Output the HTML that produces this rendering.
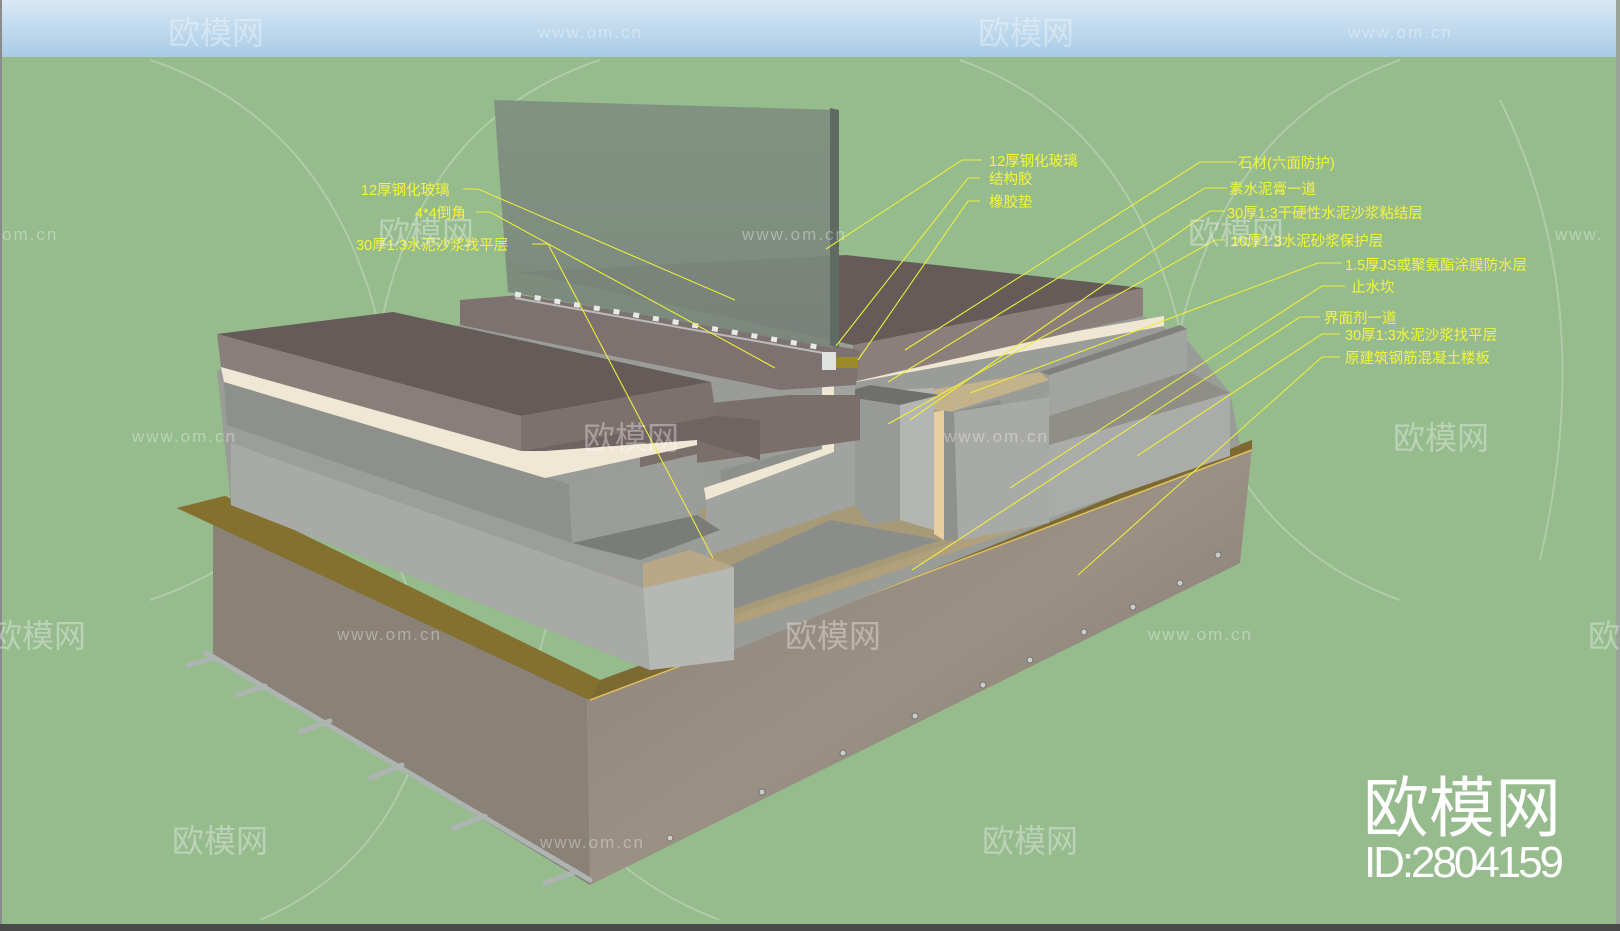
<!DOCTYPE html>
<html><head><meta charset="utf-8"><style>
html,body{margin:0;padding:0;background:#96bb8d;}
svg{display:block}
.l{font-family:"Liberation Sans","Noto Sans CJK SC",sans-serif;font-size:14.5px;fill:#f4f53a}
.ln{stroke:#ecee3c;stroke-width:1.1;fill:none}
.wm{font-family:"Liberation Sans","Noto Sans CJK SC",sans-serif;fill:#fff;opacity:.35}
</style></head><body>
<svg width="1620" height="931" viewBox="0 0 1620 931" xmlns="http://www.w3.org/2000/svg">
<defs>
<linearGradient id="top" x1="0" y1="0" x2="0" y2="1"><stop offset="0" stop-color="#d8e8f5"/><stop offset="1" stop-color="#a9cbe6"/></linearGradient>
<linearGradient id="slabR" x1="0" y1="0" x2="1" y2="1"><stop offset="0" stop-color="#8c8177"/><stop offset=".5" stop-color="#9a9084"/><stop offset="1" stop-color="#7d746b"/></linearGradient>
<linearGradient id="glass" x1="0" y1="0" x2="0" y2="1"><stop offset="0" stop-color="#7f8f80"/><stop offset="1" stop-color="#7a857c"/></linearGradient>
</defs>
<rect width="1620" height="931" fill="#96bb8d"/>
<rect width="1620" height="57" fill="url(#top)"/>
<rect x="0" y="0" width="2" height="931" fill="#8a8a8a"/>
<rect x="1616" y="0" width="4" height="931" fill="#9aa39a"/>
<rect x="0" y="924" width="1620" height="7" fill="#4a4a4a"/>

<g stroke="#c9dcc4" stroke-width="2" fill="none" opacity=".5">
<path d="M150 60 Q330 120 380 330 Q330 540 150 600"/>
<path d="M600 60 Q420 120 380 330 Q430 540 600 600"/>
<path d="M960 60 Q1130 120 1180 330 Q1130 540 960 600"/>
<path d="M1400 60 Q1230 120 1180 330 Q1230 540 1400 600"/>
<path d="M1500 100 Q1600 300 1540 560"/>
<path d="M240 420 Q420 500 430 700 Q400 860 260 920"/>
<path d="M720 420 Q560 500 530 700 Q560 860 720 920"/>
</g>

<polygon points="213,520 587,697 590,885 213,655" fill="#8a8177"/>
<polygon points="587,697 1252,448 1240,563 590,885" fill="url(#slabR)"/>
<polygon points="177,508 225,496 600,680 1252,440 1252,450 590,700 585,698" fill="#7d6a32"/>
<polygon points="177,508 225,496 600,680 590,700" fill="#85712f"/>
<line x1="590" y1="700" x2="1252" y2="450" stroke="#e0c060" stroke-width="1.5"/>
<g stroke="#aeb4b2" stroke-width="5" stroke-linecap="round">
<line x1="205" y1="652" x2="590" y2="880"/>
<line x1="188" y1="665" x2="215" y2="658"/><line x1="237" y1="695" x2="265" y2="686"/>
<line x1="300" y1="732" x2="330" y2="721"/><line x1="370" y1="778" x2="402" y2="765"/>
<line x1="453" y1="828" x2="485" y2="816"/><line x1="545" y1="883" x2="575" y2="872"/>
</g>
<g fill="#c8ccca" stroke="#666" stroke-width=".8">
<circle cx="1218" cy="555" r="3"/><circle cx="1180" cy="583" r="3"/><circle cx="1133" cy="607" r="3"/><circle cx="1084" cy="632" r="3"/><circle cx="1030" cy="660" r="3"/><circle cx="983" cy="685" r="3"/><circle cx="915" cy="716" r="3"/><circle cx="843" cy="753" r="3"/><circle cx="762" cy="792" r="3"/><circle cx="670" cy="838" r="3"/>
</g>

<polygon points="217,370 460,325 846,310 1143,316 1187,340 1230,393 1240,445 734,650 650,670 231,505" fill="#9a9c98"/>
<polygon points="720,470 1000,400 1049,500 734,610" fill="#8e908c"/>
<polygon points="734,600 1049,500 1049,520 734,625" fill="#b0a07c"/>

<polygon points="1049,445 1230,393 1230,456 1049,518" fill="#aaaca9"/>
<polygon points="1049,416 1187,371 1230,393 1049,445" fill="#8f8f88"/>
<polygon points="1049,375 1187,329 1187,371 1049,416" fill="#a2a4a1"/>
<polygon points="1040,372 1180,325 1187,329 1049,375" fill="#7f807c"/>
<polygon points="870,400 1040,372 1049,380 950,412" fill="#c4b38a"/>
<polygon points="700,510 820,465 960,540 720,620" fill="#a79a78"/>
<polygon points="720,570 830,520 940,540 730,610" fill="#8b8d8a"/>
<polygon points="954,412 1049,397 1049,523 958,541" fill="#a8aaa7"/>
<polygon points="940,410 954,412 958,541 944,540" fill="#8f918e"/>
<polygon points="934,412 944,410 944,540 934,534" fill="#e6cf9c"/>
<polygon points="855,395 890,390 900,405 900,520 870,525 855,505" fill="#989a97"/>
<polygon points="890,390 934,388 934,530 900,520 900,405" fill="#b4b6b3"/>
<polygon points="835,395 870,385 940,395 900,405" fill="#6f706c"/>
<polygon points="822,375 1164,316 1164,326 834,386 834,452 706,500 704,488 822,449" fill="#efe7d3"/>
<polygon points="834,386 855,384 855,505 706,556 706,500 834,452" fill="#a1a3a0"/>
<polygon points="520,272 846,255 1143,288 914,349 853,345" fill="#655b58"/>
<polygon points="853,345 1143,288 1143,316 853,382" fill="#8b7f7c"/>
<polygon points="460,300 520,295 860,350 856,385 780,390 460,325" fill="#7e7270"/>
<polygon points="494,100 839,110 839,349 508,292" fill="url(#glass)" opacity=".92"/>
<polygon points="830,108 839,110 839,349 830,345" fill="#5f6a62"/>
<line x1="515" y1="294" x2="829" y2="349" stroke="#e8eaea" stroke-width="5" stroke-dasharray="6 14"/>
<line x1="515" y1="298" x2="829" y2="354" stroke="#bcbcbc" stroke-width="2"/>
<rect x="822" y="352" width="14" height="18" fill="#dfe2e0"/>
<rect x="836" y="357" width="22" height="11" fill="#9a8a2a"/>
<polygon points="640,410 790,395 860,395 860,440 720,460 640,470" fill="#7b6f6c"/>
<polygon points="231,443 643,588 650,670 231,505" fill="#a8aaa7"/>
<polygon points="643,588 734,567 734,660 650,670" fill="#b6b8b5"/>
<polygon points="604,575 690,550 734,567 643,588" fill="#b9a888"/>
<polygon points="225,425 643,560 643,588 231,443" fill="#9c9e9a"/>
<polygon points="224,382 569,484 572,543 227,425" fill="#8e908d"/>
<polygon points="569,484 697,454 697,515 572,543" fill="#9b9d9a"/>
<polygon points="572,543 697,515 720,530 640,560" fill="#7a7c79"/>
<polygon points="221,367 545,451 697,425 697,445 545,478 224,382" fill="#f0e8d5"/>
<polygon points="217,334 393,312 711,382 521,416" fill="#655b58"/>
<polygon points="217,334 521,416 521,451 221,367" fill="#8a7e7a"/>
<polygon points="521,416 711,382 716,416 521,451" fill="#7d716e"/>
<polygon points="521,451 716,416 760,420 760,460 697,440 545,451" fill="#6f6462"/>

<g class="ln">
<polyline points="463,189 478,189 735,300"/>
<polyline points="476,212 490,212 775,368"/>
<polyline points="532,244 548,244 713,558"/>
<polyline points="982,160 962,160 826,249"/>
<polyline points="980,178 968,178 836,346"/>
<polyline points="980,201 968,201 858,360"/>
<polyline points="1237,162 1200,162 905,350"/>
<polyline points="1227,188 1205,188 888,382"/>
<polyline points="1225,211 1210,211 910,420"/>
<polyline points="1225,240 1215,240 888,424"/>
<polyline points="1342,263 1318,263 970,393"/>
<polyline points="1345,286 1322,286 1010,488"/>
<polyline points="1320,317 1300,317 912,570"/>
<polyline points="1340,334 1322,334 1137,456"/>
<polyline points="1340,357 1322,357 1078,575"/>
</g>
<g class="l">
<text x="361" y="195">12厚钢化玻璃</text>
<text x="415" y="218">4*4倒角</text>
<text x="356" y="250">30厚1:3水泥沙浆找平层</text>
<text x="989" y="166">12厚钢化玻璃</text>
<text x="989" y="184">结构胶</text>
<text x="989" y="207">橡胶垫</text>
<text x="1238" y="168">石材(六面防护)</text>
<text x="1229" y="194">素水泥膏一道</text>
<text x="1227" y="218">30厚1:3干硬性水泥沙浆粘结层</text>
<text x="1231" y="246">10厚1:3水泥砂浆保护层</text>
<text x="1345" y="270">1.5厚JS或聚氨酯涂膜防水层</text>
<text x="1351" y="292">止水坎</text>
<text x="1324" y="323">界面剂一道</text>
<text x="1345" y="340">30厚1:3水泥沙浆找平层</text>
<text x="1345" y="363">原建筑钢筋混凝土楼板</text>
</g>

<g class="wm" font-size="32">
<text x="168" y="44">欧模网</text><text x="978" y="44">欧模网</text>
<text x="378" y="244">欧模网</text><text x="1188" y="244">欧模网</text>
<text x="583" y="449">欧模网</text><text x="1393" y="449">欧模网</text>
<text x="-10" y="647">欧模网</text><text x="785" y="647">欧模网</text><text x="1588" y="647">欧模网</text>
<text x="172" y="852">欧模网</text><text x="982" y="852">欧模网</text>
</g>
<g class="wm" font-size="17" letter-spacing="2">
<text x="538" y="38">www.om.cn</text><text x="1348" y="38">www.om.cn</text>
<text x="2" y="240">om.cn</text><text x="742" y="240">www.om.cn</text><text x="1555" y="240">www.</text>
<text x="132" y="442">www.om.cn</text><text x="944" y="442">www.om.cn</text>
<text x="337" y="640">www.om.cn</text><text x="1148" y="640">www.om.cn</text>
<text x="540" y="848">www.om.cn</text>
</g>
<text x="1363" y="831" font-family="'Liberation Sans','Noto Sans CJK SC',sans-serif" font-size="66" fill="#fff">欧模网</text>
<text x="1364" y="877" font-family="'Liberation Sans',sans-serif" font-size="44" fill="#fff" textLength="200">ID:2804159</text>
</svg>
</body></html>
